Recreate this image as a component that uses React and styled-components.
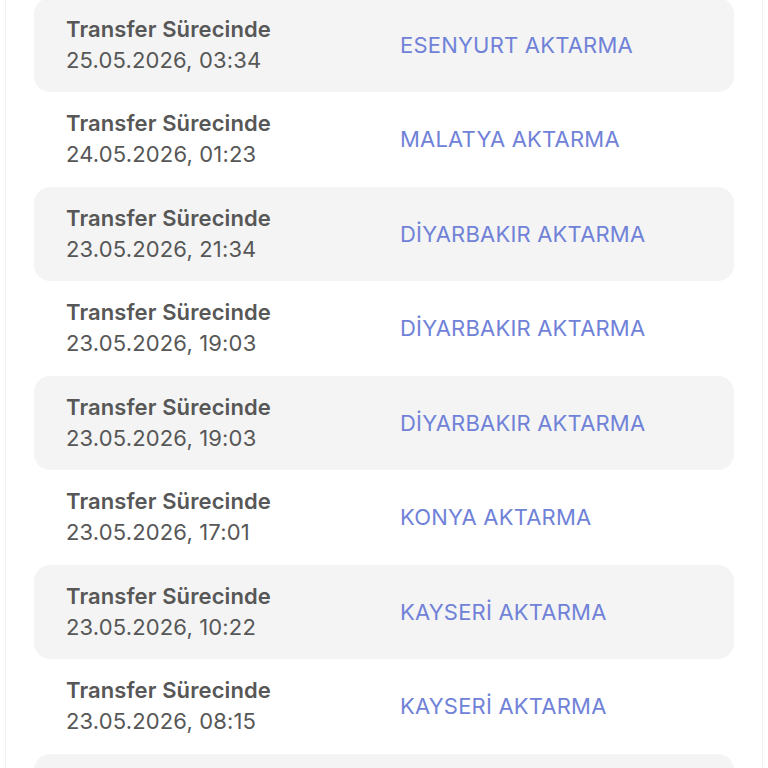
import styled, { createGlobalStyle } from "styled-components";

const GlobalStyle = createGlobalStyle`
  html, body {
    margin: 0;
    padding: 0;
    background: #ffffff;
  }
  body {
    font-family: Inter, "Liberation Sans", sans-serif;
    -webkit-font-smoothing: antialiased;
  }
`;

const transfers = [
  { date: "25.05.2026, 03:34", place: "ESENYURT AKTARMA" },
  { date: "24.05.2026, 01:23", place: "MALATYA AKTARMA" },
  { date: "23.05.2026, 21:34", place: "DİYARBAKIR AKTARMA" },
  { date: "23.05.2026, 19:03", place: "DİYARBAKIR AKTARMA" },
  { date: "23.05.2026, 19:03", place: "DİYARBAKIR AKTARMA" },
  { date: "23.05.2026, 17:01", place: "KONYA AKTARMA" },
  { date: "23.05.2026, 10:22", place: "KAYSERİ AKTARMA" },
  { date: "23.05.2026, 08:15", place: "KAYSERİ AKTARMA" },
];

function App() {
  return (
    <>
      <GlobalStyle />
      <Page>
        <List>
          {transfers.map((t, i) => (
            <Row key={i} $shaded={i % 2 === 0}>
              <Status>
                <Title>Transfer Sürecinde</Title>
                <Date>{t.date}</Date>
              </Status>
              <Place>{t.place}</Place>
            </Row>
          ))}
          {/* next entry, scrolled below the fold */}
          <Row $shaded />
        </List>
      </Page>
    </>
  );
}

export default App;

const Page = styled.div`
  height: 768px;
  overflow: hidden;
  margin: 0 5px;
  border-left: 1px solid #f1f1f1;
  border-right: 1px solid #f1f1f1;
`;

const List = styled.div`
  display: flex;
  flex-direction: column;
  margin: -2.5px 28px 0;
`;

const Row = styled.div`
  display: grid;
  grid-template-columns: 334px 1fr;
  align-items: center;
  flex: 0 0 94.5px;
  height: 94.5px;
  box-sizing: border-box;
  padding-left: 32px;
  border-radius: 16px;
  background: ${(p) => (p.$shaded ? "#f4f4f4" : "transparent")};
`;

const Status = styled.div`
  display: flex;
  flex-direction: column;
  gap: 2px;
  color: #575757;
  font-size: 22px;
  line-height: 29px;
`;

const Title = styled.span`
  font-weight: 600;
  letter-spacing: 0.1px;
`;

const Date = styled.span`
  font-weight: 400;
  letter-spacing: 0.15px;
`;

const Place = styled.span`
  color: #7082d8;
  font-size: 22px;
  font-weight: 400;
  letter-spacing: 0.2px;
`;
